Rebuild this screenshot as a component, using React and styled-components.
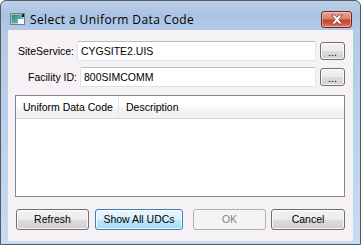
import React from "react";
import styled, { createGlobalStyle } from "styled-components";

const Global = createGlobalStyle`
  html, body { margin: 0; padding: 0; background: #ffffff; }
  * { box-sizing: border-box; }
`;

const Window = styled.div`
  width: 361px;
  height: 245px;
  display: flex;
  flex-direction: column;
  border: 1px solid #555b63;
  border-radius: 6px 6px 0 0;
  background: linear-gradient(180deg, #bcd1ea 0px, #a9c3e1 14px, #b2cae6 30px, #b9d1ec 120px, #c6dcf3 245px);
  padding: 0 7px 3px 7px;
  overflow: hidden;
`;

const TitleBar = styled.div`
  height: 29px;
  display: flex;
  align-items: center;
  padding: 7px 2px 0 2px;
`;

const Title = styled.span`
  font-family: "Segoe UI", "Open Sans", "Noto Sans", sans-serif;
  font-size: 12px;
  font-weight: normal;
  letter-spacing: 0.4px;
  color: #000;
  margin-left: 4px;
  flex: 1;
`;

const CloseButton = styled.div`
  width: 31px;
  height: 17px;
  margin-right: -1px;
  border: 1px solid #6b2b23;
  border-radius: 3px;
  background: linear-gradient(180deg, #e8a597 0%, #d8806c 45%, #c2452f 55%, #cf5a43 80%, #e08d71 100%);
  box-shadow: inset 0 0 0 1px rgba(255, 220, 210, 0.45);
  display: flex;
  align-items: center;
  justify-content: center;
`;

const Client = styled.div`
  flex: 1;
  background: #f5f1f5;
  display: flex;
  flex-direction: column;
  padding: 11px 8px 0 0;
`;

const FieldRow = styled.div`
  display: flex;
  align-items: center;
  height: 20px;
  margin-bottom: ${(p) => p.$gap}px;
`;

const Label = styled.label`
  width: ${(p) => p.$width}px;
  padding-right: 1px;
  text-align: right;
  font-family: "Liberation Sans", Arial, sans-serif;
  font-size: 10.5px;
  color: #000;
  white-space: nowrap;
`;

const TextBox = styled.div`
  flex: 1;
  height: 20px;
  margin-left: 2px;
  background: #ffffff;
  border: 1px solid #dfe3e8;
  border-top-color: #b9bcc2;
  border-radius: 2px;
  display: flex;
  align-items: center;
  padding-left: 3px;
  font-family: "Liberation Sans", Arial, sans-serif;
  font-size: 10.5px;
  color: #000;
`;

const Button = styled.button`
  width: ${(p) => p.$w}px;
  height: ${(p) => p.$h}px;
  margin-left: ${(p) => p.$ml || 0}px;
  padding: 0;
  border: 1px solid ${(p) => (p.$disabled ? "#adb2b5" : p.$default ? "#3c7fb1" : "#707070")};
  border-radius: 3px;
  background: ${(p) =>
    p.$disabled
      ? "#f4f4f4"
      : p.$default
      ? "linear-gradient(180deg, #eaf6fd 0%, #d9f0fc 50%, #bee6fd 51%, #a7d9f5 100%)"
      : "linear-gradient(180deg, #f2f2f2 0%, #ebebeb 50%, #dddddd 51%, #cfcfcf 100%)"};
  box-shadow: inset 0 0 0 1px ${(p) => (p.$disabled ? "#f4f4f4" : "rgba(255,255,255,0.8)")};
  font-family: "Liberation Sans", Arial, sans-serif;
  font-size: 10.5px;
  font-weight: normal;
  color: ${(p) => (p.$disabled ? "#838383" : "#000")};
  display: flex;
  align-items: center;
  justify-content: center;
  line-height: 1;
`;

const Browse = styled(Button)`
  margin-left: 4px;
  padding-bottom: 2px;
  align-items: flex-end;
`;

const ListView = styled.div`
  height: 102px;
  margin: 1px 0 0 7px;
  border: 1px solid #828790;
  background: #ffffff;
  display: flex;
  flex-direction: column;
`;

const Header = styled.div`
  height: 23px;
  display: flex;
  background: linear-gradient(180deg, #ffffff 0%, #ffffff 40%, #f3f4f7 60%, #f1f2f5 100%);
  border-bottom: 1px solid #d5d5d5;
`;

const HeaderCell = styled.div`
  width: ${(p) => (p.$w ? `${p.$w}px` : "auto")};
  flex: ${(p) => (p.$w ? "none" : 1)};
  padding-left: 7px;
  display: flex;
  align-items: center;
  border-right: ${(p) => (p.$w ? "1px solid #e3e5e9" : "none")};
  font-family: "Liberation Sans", Arial, sans-serif;
  font-size: 10.5px;
  color: #000;
  white-space: nowrap;
`;

const ButtonBar = styled.div`
  display: flex;
  align-items: center;
  margin: 12px 0 0 8px;
`;

const Spacer = styled.div`
  flex: 1;
`;

const AppIcon = () => (
  <svg width="16" height="13" viewBox="0 0 16 13">
    <defs>
      <linearGradient id="ig" x1="0" y1="0" x2="1" y2="1">
        <stop offset="0" stopColor="#2f7d6c" />
        <stop offset="0.6" stopColor="#5eb3a8" />
        <stop offset="1" stopColor="#9bd3d6" />
      </linearGradient>
    </defs>
    <rect x="0.5" y="0.5" width="14" height="11" fill="#e9eef2" stroke="#6f7f8c" />
    <rect x="1.5" y="1.5" width="12" height="9" fill="url(#ig)" />
    <rect x="8" y="6" width="6" height="5" fill="#f6f8fa" />
    <rect x="12" y="1" width="2" height="3" fill="#1a1a1a" />
  </svg>
);

const CloseGlyph = () => (
  <svg width="14" height="11" viewBox="0 0 14 11">
    <path
      d="M1.5 1 L5 1 L7 3.4 L9 1 L12.5 1 L8.8 5.5 L12.5 10 L9 10 L7 7.6 L5 10 L1.5 10 L5.2 5.5 Z"
      fill="#ffffff"
      stroke="#7a3a32"
      strokeWidth="0.8"
      strokeLinejoin="round"
    />
  </svg>
);

export default function App() {
  return (
    <>
      <Global />
      <Window>
        <TitleBar>
          <AppIcon />
          <Title>Select a Uniform Data Code</Title>
          <CloseButton>
            <CloseGlyph />
          </CloseButton>
        </TitleBar>
        <Client>
          <FieldRow $gap={6}>
            <Label $width={67}>SiteService:</Label>
            <TextBox>CYGSITE2.UIS</TextBox>
            <Browse $w={25} $h={18}>...</Browse>
          </FieldRow>
          <FieldRow $gap={7}>
            <Label $width={70}>Facility ID:</Label>
            <TextBox>800SIMCOMM</TextBox>
            <Browse $w={25} $h={18}>...</Browse>
          </FieldRow>
          <ListView>
            <Header>
              <HeaderCell $w={103}>Uniform Data Code</HeaderCell>
              <HeaderCell>Description</HeaderCell>
            </Header>
          </ListView>
          <ButtonBar>
            <Button $w={73} $h={21}>Refresh</Button>
            <Button $w={88} $h={21} $ml={6} $default>Show All UDCs</Button>
            <Spacer />
            <Button $w={73} $h={21} $disabled>OK</Button>
            <Button $w={74} $h={21} $ml={5}>Cancel</Button>
          </ButtonBar>
        </Client>
      </Window>
    </>
  );
}
